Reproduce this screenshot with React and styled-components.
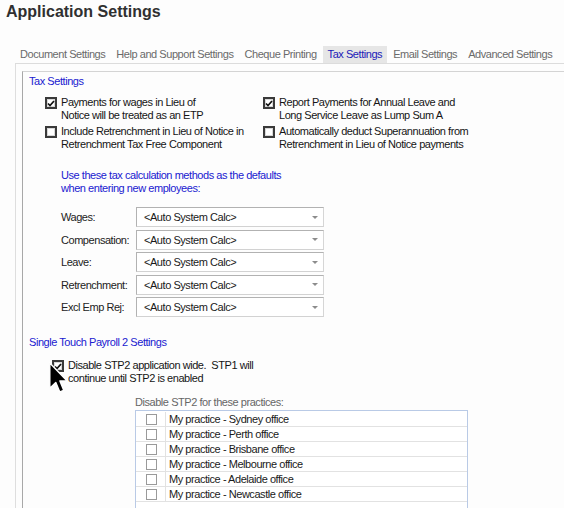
import React from "react";
import styled, { createGlobalStyle } from "styled-components";

const Global = createGlobalStyle`
  html, body { margin: 0; padding: 0; background: #fdfdfd; }
  body { font-family: "Liberation Sans", Arial, sans-serif; font-size: 11px; letter-spacing: -0.45px; color: #151515; }
  * { box-sizing: border-box; }
`;

const Page = styled.div`
  width: 564px;
  height: 508px;
  overflow: hidden;
  background: #fdfdfd;
  position: relative;
`;

const Title = styled.h1`
  margin: 0;
  padding: 3px 0 0 6px;
  height: 46px;
  font-size: 16px;
  font-weight: bold;
  color: #303030;
  letter-spacing: 0;
`;

const TabBar = styled.div`
  display: flex;
  margin-left: 15px;
  border-bottom: 1px solid #dcdcdc;
  height: 18px;
`;

const Tab = styled.div`
  padding: 0 5px;
  height: 17px;
  line-height: 17px;
  margin-left: ${(p) => (p.$first ? "0" : "1px")};
  color: ${(p) => (p.$active ? "#2020b8" : "#6a6a6a")};
  background: ${(p) => (p.$active ? "#e6e6e6" : "transparent")};
  white-space: nowrap;
`;

const Outer = styled.div`
  margin-left: 15px;
  border-left: 1px solid #dedede;
  padding: 7px 0 0 6px;
  height: 500px;
`;

const Group = styled.div`
  border-left: 1px solid #a8a8a8;
  border-top: 1px solid #d4d4d4;
  height: 500px;
  padding: 3px 0 0 6px;
`;

const Heading = styled.div`
  color: #2020d0;
  line-height: 13px;
  margin-top: ${(p) => p.$mt || 0}px;
`;

const CheckGrid = styled.div`
  display: grid;
  grid-template-columns: 218px 240px;
  row-gap: 3px;
  margin-top: 8px;
  margin-left: 16px;
`;

const CheckItem = styled.label`
  display: flex;
  align-items: flex-start;
  gap: 4px;
  line-height: 13px;
  white-space: nowrap;
`;

const Box = styled.span`
  flex: none;
  width: 12px;
  height: 12px;
  margin-top: 1px;
  border: 2px solid #3a3a3a;
  background: #fff;
  box-shadow: inset 0 0 0 1px #d8d8d8;
  display: flex;
  align-items: center;
  justify-content: center;
`;

const SmallBox = styled.span`
  display: block;
  width: 11px;
  height: 11px;
  border: 1px solid #9a9a9a;
  background: #fff;
`;

const Check = () => (
  <svg width="8" height="7" viewBox="0 0 8 7">
    <path d="M1 3.5 L3 5.5 L7 1" fill="none" stroke="#111" strokeWidth="1.7" />
  </svg>
);

const Intro = styled.div`
  color: #2020d0;
  line-height: 13px;
  margin: 18px 0 0 32px;
`;

const Form = styled.div`
  display: grid;
  grid-template-columns: 75px 188px;
  row-gap: 2.5px;
  margin: 12px 0 0 32px;
`;

const FieldLabel = styled.div`
  line-height: 20px;
  height: 20px;
  color: #222;
`;

const Select = styled.div`
  height: 20px;
  border: 1px solid #b2b2b2;
  border-right-color: #d6d6d6;
  border-bottom-color: #d2d2d2;
  background: #fff;
  display: flex;
  align-items: center;
  justify-content: space-between;
  padding: 0 5px 0 7px;
  color: #1a1a1a;
`;

const Caret = styled.span`
  width: 0;
  height: 0;
  border-left: 3px solid transparent;
  border-right: 3px solid transparent;
  border-top: 3px solid #8c8c8c;
`;

const StpRow = styled.div`
  margin: 10px 0 0 23px;
  position: relative;
`;

const Cursor = styled.svg`
  position: absolute;
  left: -3px;
  top: 3px;
`;

const ListHeading = styled.div`
  color: #666;
  line-height: 13px;
  margin: 11px 0 0 106px;
`;

const List = styled.div`
  margin: 1px 0 0 106px;
  width: 333px;
  height: 120px;
  border: 1px solid #b9cae6;
  border-bottom: none;
  background: #fff;
  padding-top: 1px;
`;

const Row = styled.div`
  display: grid;
  grid-template-columns: 30px 1fr;
  height: 15px;
  border-bottom: 1px solid #e2e2e2;
`;

const CheckCell = styled.div`
  display: flex;
  align-items: center;
  padding-left: 10px;
  border-right: 1px solid #e2e2e2;
`;

const NameCell = styled.div`
  line-height: 14px;
  padding-left: 3px;
  color: #1a1a1a;
`;

const tabs = [
  "Document Settings",
  "Help and Support Settings",
  "Cheque Printing",
  "Tax Settings",
  "Email Settings",
  "Advanced Settings",
];

const fields = ["Wages:", "Compensation:", "Leave:", "Retrenchment:", "Excl Emp Rej:"];

const offices = ["Sydney", "Perth", "Brisbane", "Melbourne", "Adelaide", "Newcastle"];

export default function App() {
  return (
    <Page>
      <Global />
      <Title>Application Settings</Title>
      <TabBar>
        {tabs.map((t, i) => (
          <Tab key={t} $first={i === 0} $active={t === "Tax Settings"}>
            {t}
          </Tab>
        ))}
      </TabBar>
      <Outer>
        <Group>
          <Heading>Tax Settings</Heading>
          <CheckGrid>
            <CheckItem>
              <Box><Check /></Box>
              <span>Payments for wages in Lieu of<br />Notice will be treated as an ETP</span>
            </CheckItem>
            <CheckItem>
              <Box><Check /></Box>
              <span>Report Payments for Annual Leave and<br />Long Service Leave as Lump Sum A</span>
            </CheckItem>
            <CheckItem>
              <Box />
              <span>Include Retrenchment in Lieu of Notice in<br />Retrenchment Tax Free Component</span>
            </CheckItem>
            <CheckItem>
              <Box />
              <span>Automatically deduct Superannuation from<br />Retrenchment in Lieu of Notice payments</span>
            </CheckItem>
          </CheckGrid>
          <Intro>
            Use these tax calculation methods as the defaults
            <br />
            when entering new employees:
          </Intro>
          <Form>
            {fields.map((f) => (
              <React.Fragment key={f}>
                <FieldLabel>{f}</FieldLabel>
                <Select>
                  <span>&lt;Auto System Calc&gt;</span>
                  <Caret />
                </Select>
              </React.Fragment>
            ))}
          </Form>
          <Heading $mt={19}>Single Touch Payroll 2 Settings</Heading>
          <StpRow>
            <CheckItem>
              <Box><Check /></Box>
              <span>Disable STP2 application wide.&nbsp; STP1 will<br />continue until STP2 is enabled</span>
            </CheckItem>
            <Cursor width="19" height="32" viewBox="0 0 12 20">
              <path
                d="M0.5 0.5 L0.5 16.5 L4.3 12.8 L6.8 18.8 L9.3 17.8 L6.9 11.9 L11.5 11.9 Z"
                fill="#000"
                stroke="#fff"
                strokeWidth="0.9"
                strokeLinejoin="round"
              />
            </Cursor>
          </StpRow>
          <ListHeading>Disable STP2 for these practices:</ListHeading>
          <List>
            {offices.map((o) => (
              <Row key={o}>
                <CheckCell><SmallBox /></CheckCell>
                <NameCell>My practice - {o} office</NameCell>
              </Row>
            ))}
          </List>
        </Group>
      </Outer>
    </Page>
  );
}
